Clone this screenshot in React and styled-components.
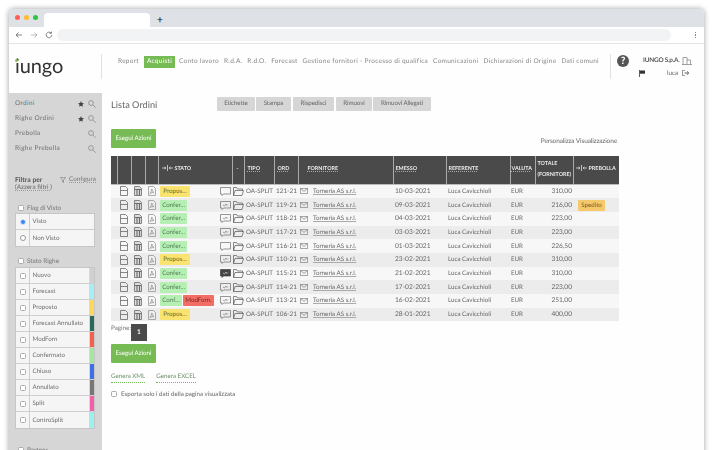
import React from "react";
import styled, { createGlobalStyle } from "styled-components";

const Global = createGlobalStyle`
  html, body { margin: 0; padding: 0; background: #fff; }
  body { width: 714px; height: 450px; overflow: hidden; font-family: "Lato", "Liberation Sans", sans-serif; color: #666; text-rendering: geometricPrecision; }
  * { box-sizing: border-box; }
`;

const Stage = styled.div`
  width: 714px; height: 450px; overflow: hidden; padding: 9px 10px 0 9px; filter: blur(0.4px);
`;
const Win = styled.div`
  width: 695px; height: 460px; background: #fefefe; border-radius: 5px 5px 0 0;
  box-shadow: 0 0 5px 1px rgba(0,0,0,.28); overflow: hidden; display: flex; flex-direction: column;
`;
const TabStrip = styled.div`
  height: 18px; background: #dee1e6; display: flex; align-items: flex-end; padding-left: 6px; flex: none;
`;
const Lights = styled.div`
  display: flex; gap: 4px; align-self: center; margin-right: 6px; margin-top: -2px;
`;
const Light = styled.span`
  width: 5px; height: 5px; border-radius: 50%; background: ${p => p.$c};
`;
const Tab = styled.div`
  width: 106px; height: 14px; background: #fff; border-radius: 4px 4px 0 0;
`;
const Plus = styled.span`
  font-size: 10px; font-weight: 700; color: #444; margin: 0 0 0 7px; line-height: 14px;
`;
const AddressBar = styled.div`
  height: 17px; background: #fff; border-bottom: 1px solid #e4e4e4; display: flex; align-items: center; padding: 0 8px 0 6px; flex: none;
`;
const NavGlyphs = styled.div`
  display: flex; gap: 7px; width: 42px; flex: none; color: #666;
`;
const Url = styled.div`
  width: 614px; height: 12px; border-radius: 6px; background: #f1f3f4; flex: none;
`;
const Dots = styled.div`
  margin-left: auto; display: flex; flex-direction: column; gap: 1px;
  span { width: 1.5px; height: 1.5px; background: #888; display: block; }
`;

const Header = styled.header`
  height: 49px; display: flex; align-items: flex-start; flex: none; padding-top: 10px;
`;
const LogoBox = styled.div`
  width: 93px; height: 25px; border-right: 1px solid #e2e2e2; padding-left: 6px; position: relative; flex: none;
`;
const Logo = styled.span`
  font-size: 20px; line-height: 25px; color: #333; letter-spacing: -.1px; font-weight: 400; display: block;
`;
const LogoDot = styled.i`
  position: absolute; left: 6px; top: 5px; width: 3px; height: 3px; border-radius: 50%; background: #8fc04f;
`;
const Nav = styled.nav`
  width: 508px; height: 25px; display: flex; align-items: flex-start; padding: 2px 0 0 16px; flex: none;
`;
const NavItem = styled.a`
  font-size: 6.5px; line-height: 12px; letter-spacing: .27px; color: ${p => p.$on ? "#fff" : "#888"}; white-space: nowrap;
  background: ${p => p.$on ? "#77bb55" : "transparent"};
  padding: ${p => p.$on ? "0 3px" : "0"}; margin-right: ${p => p.$gap}px;
`;
const UserBox = styled.div`
  width: 94px; height: 25px; border-left: 1px solid #e2e2e2; display: flex; padding-left: 6px; flex: none;
`;
const Help = styled.div`
  width: 12px; height: 12px; border-radius: 50%; background: #555; color: #fff; font-size: 10px; font-weight: 900;
  display: flex; align-items: center; justify-content: center; margin-top: 1px; flex: none;
`;
const UserCol = styled.div`
  display: flex; flex-direction: column; margin-left: 10px; width: 60px;
`;
const Company = styled.div`
  font-size: 6.4px; font-weight: 700; color: #555; display: flex; align-items: center; gap: 2px; height: 14px; padding-left: 4px; letter-spacing: -.2px; white-space: nowrap;
`;
const UserLine = styled.div`
  font-size: 6.3px; color: #666; display: flex; align-items: center; height: 12px;
  span { margin-left: 22px; margin-right: 4px; }
`;

const Body = styled.div`
  flex: 1; display: flex; min-height: 0;
`;
const Side = styled.aside`
  width: 93px; background: #d6d6d6; padding: 3px 6px 0 6px; flex: none; font-size: 6.5px; color: #666;
`;
const MenuRow = styled.div`
  height: 15px; display: flex; align-items: center; letter-spacing: .3px; color: #707070; font-size: 6.5px;
  span { flex: 1; }
  svg { margin-left: 4px; }
`;
const Filter = styled.div`
  margin-top: 20px; display: flex; justify-content: space-between; align-items: flex-start; line-height: 8px; height: 20px; font-size: 6.4px;
  b { color: #555; font-weight: 700; display: block; font-size: 6.8px; }
  u { text-decoration: underline dotted #999; }
`;
const Conf = styled.div`
  display: flex; gap: 3px; align-items: center; color: #777; font-size: 6.3px;
`;
const CheckTitle = styled.div`
  display: flex; align-items: center; gap: 3px; height: 10px; margin: ${p => p.$mt}px 0 ${p => p.$mb}px 3px; color: #777; font-size: 6.4px;
`;
const Box = styled.span`
  width: 6px; height: 6px; background: #fff; border: 1px solid #aaa; border-radius: 1.5px; display: block; flex: none;
`;
const Group = styled.div`
  border: 1px solid #c6c6c6; background: #f5f5f5; margin-right: 1px; width: 80px;
`;
const GroupRow = styled.div`
  height: ${p => p.$h}px; display: flex; align-items: stretch; border-bottom: 1px solid #cfcfcf; font-size: 6.2px; color: #6d6d6d;
  &:last-child { border-bottom: none; }
`;
const Ctl = styled.div`
  width: 14px; border-right: 1px solid #cfcfcf; display: flex; align-items: center; justify-content: center; flex: none;
`;
const Label = styled.div`
  flex: 1; padding-left: 2.5px; display: flex; align-items: center; white-space: nowrap;
`;
const Strip = styled.div`
  width: 5px; flex: none; background: ${p => p.$c}; border-left: 1px solid #d8d8d8;
`;
const Radio = styled.span`
  width: 6px; height: 6px; border-radius: 50%; display: block;
  background: ${p => p.$on ? "#3b82f6" : "#fff"}; border: 1px solid ${p => p.$on ? "#cfe0fb" : "#999"};
`;

const Main = styled.main`
  flex: 1; padding: 3px 0 0 9px; font-size: 6.5px; min-width: 0;
`;
const TitleRow = styled.div`
  display: flex; height: 15px; align-items: center; width: 320px;
`;
const Title = styled.h1`
  font-size: 9.2px; font-weight: 400; color: #666; margin: 0; width: 106px; flex: none; position: relative; top: 1px;
`;
const ToolBtn = styled.button`
  width: ${p => p.$w}px; height: 14px; margin-right: ${p => p.$m}px; background: #d6d6d6; border: 0; padding: 0; flex: none;
  font: 400 6.2px "Lato", sans-serif; color: #666; letter-spacing: -.1px; border-radius: 1px; text-rendering: geometricPrecision;
`;
const ActionRow = styled.div`
  display: flex; justify-content: space-between; align-items: flex-end; width: 506px; margin-top: 18px;
`;
const GreenBtn = styled.button`
  width: 45px; height: 19px; border: 0; background: #77bb55; color: #fff; font: 400 6.2px "Lato", sans-serif; border-radius: 1px; padding: 0; flex: none; text-rendering: geometricPrecision;
`;
const Personal = styled.a`
  font-size: 6.5px; color: #666; letter-spacing: -.12px; margin-bottom: 3px;
`;
const Table = styled.table`
  table-layout: fixed; border-collapse: collapse; width: 508px; margin-top: 8px;
`;
const Th = styled.th`
  background: #4a4a4a; color: #ececec; height: 28px; font-size: 5.4px; font-weight: 700; text-align: left; padding: 0 0 0 ${p => p.$pl || 2}px;
  border-left: 1px solid #aaa; border-bottom: 1px solid #bbb; white-space: nowrap; line-height: 11px; letter-spacing: 0;
  &:first-child { border-left: 0; }
  u { text-decoration: underline dotted #aaa; }
`;
const Tr = styled.tr`
  background: ${p => p.$alt ? "#ececec" : "#f7f7f7"}; height: 13.7px;
`;
const Td = styled.td`
  padding: 0 ${p => p.$pr || 0}px 0 ${p => p.$pl || 0}px; font-size: ${p => p.$fs || 6.2}px; color: #666; white-space: nowrap;
  text-align: ${p => p.$right ? "right" : "left"}; height: 13.7px; line-height: 11px;
  svg { display: block; }
  u { text-decoration: underline solid #aaa; text-underline-offset: 1px; }
`;
const IconCell = styled.div`
  display: flex; justify-content: center; align-items: center;
`;
const StatusCell = styled.div`
  display: flex; align-items: center; padding-left: 2px; gap: 1px; height: 13.7px;
`;
const SupplierCell = styled.div`
  display: flex; align-items: center; gap: 5px; height: 13.7px;
`;
const Pill = styled.span`
  display: inline-flex; align-items: center; justify-content: center; height: 11px; width: ${p => p.$w}px; font-size: 6.2px; border-radius: 1px;
  background: ${p => p.$bg}; color: ${p => p.$fg}; flex: none;
`;
const Comment = styled.span`
  margin-left: auto; margin-right: 1px; display: block; flex: none;
`;
const Pager = styled.div`
  display: flex; align-items: flex-start; height: 17px; margin-top: 3px; font-size: 6.3px; color: #777;
  span { margin-top: 1px; width: 20px; }
`;
const PageNo = styled.div`
  width: 16px; height: 17px; background: #4a4a4a; color: #fff; font-size: 6.5px; font-weight: 700; display: flex; align-items: center; justify-content: center;
`;
const Bottom = styled.div`
  margin-top: 3px;
`;
const Links = styled.div`
  display: flex; gap: 11px; margin-top: 10px; font-size: 6.2px; color: #6f8f6a; line-height: 8px;
  a { border-bottom: 1px dotted #77bb55; padding-bottom: 1px; }
`;
const ExportRow = styled.div`
  display: flex; align-items: center; gap: 4px; margin-top: 7px; font-size: 6.2px; color: #666; height: 8px;
`;

const S = "#6a6a6a";
const Doc = () => <svg width="8" height="10" viewBox="0 0 8 10" fill="none" stroke={S} strokeWidth=".8"><path d="M.5.5h5l2 2v7h-7zM.5 4.5h7"/></svg>;
const Sheet = () => <svg width="8" height="10" viewBox="0 0 8 10" fill="none" stroke={S} strokeWidth=".8"><path d="M.5.5h5l2 2v7h-7z" fill="#ddd"/><path d="M1 3.500h6M3 3.500v6M5.500 3.500v6" strokeWidth="1.100"/></svg>;
const Pdf = () => <svg width="8" height="10" viewBox="0 0 8 10" fill="none" stroke="#8a8a8a" strokeWidth=".7"><path d="M.5.5h5l2 2v7h-7z"/><path d="M3.800 3c-.3 2-1 3.500-2 4.500 1.500-.8 3-1 4.200-.8-1-.7-1.800-2-2.200-3.700z"/></svg>;
const Bubble = ({ mode }) => (
  <svg width="11" height="9" viewBox="0 0 11 9" fill={mode === "dark" ? "#444" : "none"} stroke={mode === "dark" ? "#444" : S} strokeWidth=".7">
    <path d="M.5.5h10v6.500h-7l-1.500 1.500v-1.500h-1.500z"/>
    {mode !== "empty" && <path d="M3 4l1.500 1 1.500-2 1 1.500 1-1" stroke={mode === "dark" ? "#eee" : S} strokeWidth=".6"/>}
  </svg>
);
const Folder = () => <svg width="11" height="9" viewBox="0 0 11 9" fill="none" stroke="#555" strokeWidth=".7"><path d="M.5 8.500v-8h3l1 1.500h5v1.500M.5 8.500h8.500l1.500-5h-8.500z"/></svg>;
const Mail = () => <svg width="8" height="6" viewBox="0 0 8 6" fill="none" stroke="#777" strokeWidth=".7"><path d="M.4.4h7.200v5.200h-7.200zM.4.4l3.600 3 3.600-3"/></svg>;
const Star = () => <svg width="6" height="6" viewBox="0 0 10 10" fill="#444"><path d="M5 0l1.500 3.300 3.500.4-2.600 2.400.7 3.600L5 7.900 1.900 9.700l.7-3.600L0 3.700l3.500-.4z"/></svg>;
const Search = () => <svg width="8" height="8" viewBox="0 0 8 8" fill="none" stroke="#8a8a8a" strokeWidth=".8"><circle cx="3" cy="3" r="2.400"/><path d="M5 5l2.700 2.700"/></svg>;
const Funnel = () => <svg width="6" height="6" viewBox="0 0 6 6" fill="none" stroke="#777" strokeWidth=".6"><path d="M.3.4h5.400l-2.200 2.600v2.500l-1-.6v-1.900z"/></svg>;
const Splitter = () => <svg width="11" height="6" viewBox="0 0 11 6" fill="none" stroke="#ddd" strokeWidth=".8" style={{ marginRight: 2, verticalAlign: -1 }}><path d="M5.500 0v6M7 3h4M0 3h4M2.500 1.800L4 3 2.500 4.200M8.500 1.800L7 3l1.500 1.200"/></svg>;
const Building = () => <svg width="10" height="8" viewBox="0 0 10 8" fill="none" stroke="#666" strokeWidth=".6"><path d="M1 7.500v-7h4v7M5 3h3.500v4.500M0 7.500h10"/></svg>;
const Logout = () => <svg width="7" height="6" viewBox="0 0 7 6" fill="none" stroke="#666" strokeWidth=".7"><path d="M3 .4H.5v5.200H3"/><path d="M2.500 3h4M5 1.400L6.800 3 5 4.600" strokeWidth="1"/></svg>;
const Flag = () => <svg width="6" height="7" viewBox="0 0 6 7"><path d="M.5 0v7" stroke="#333" strokeWidth=".8"/><path d="M1 .5h5v3.200H1z" fill="#333"/></svg>;

const NAV = [["Report",5],["Acquisti",4,true],["Conto lavoro",5],["R.d.A.",5],["R.d.O.",5],["Forecast",5],["Gestione fornitori - Processo di qualifica",5],["Comunicazioni",5],["Dichiarazioni di Origine",5],["Dati comuni",0]];
const STATES = [["Nuovo","#d0d0d0"],["Forecast","#a8eef5"],["Proposto","#f9d85d"],["Forecast Annullato","#27695b"],["ModForn","#f4604e"],["Confermato","#a4e5a0"],["Chiuso","#3f6fe8"],["Annullato","#777"],["Split","#f25fa8"],["ControSplit","#9cf0ee"]];
const ROWS = [
  ["p","empty","121-21","10-03-2021","310,00"],
  ["c","line","119-21","09-03-2021","216,00","Spedito"],
  ["c","line","118-21","04-03-2021","223,00"],
  ["c","line","117-21","03-03-2021","223,00"],
  ["c","empty","116-21","01-03-2021","226,50"],
  ["p","line","110-21","23-02-2021","310,00"],
  ["c","dark","115-21","21-02-2021","310,00"],
  ["c","line","114-21","17-02-2021","223,00"],
  ["m","line","113-21","16-02-2021","251,00"],
  ["p","line","106-21","28-01-2021","400,00"],
];
const COLS = [6,14,14,13,74,12,30,24,95,53,64,25,38,46];

const Status = ({ k }) => {
  if (k === "p") return <Pill $w={30} $bg="#fbe36f" $fg="#6b6320">Propos...</Pill>;
  if (k === "c") return <Pill $w={27} $bg="#b6efb4" $fg="#4f7a52">Confer...</Pill>;
  return <><Pill $w={22} $bg="#b6efb4" $fg="#4f7a52">Conf...</Pill><Pill $w={31} $bg="#f26d66" $fg="#7a2420">ModForn.</Pill></>;
};

export default function App() {
  return (
    <Stage>
      <Global />
      <Win>
        <TabStrip>
          <Lights><Light $c="#ff5f57" /><Light $c="#febc2e" /><Light $c="#28c840" /></Lights>
          <Tab />
          <Plus>+</Plus>
        </TabStrip>
        <AddressBar>
          <NavGlyphs>
            <svg width="8" height="8" viewBox="0 0 8 8" fill="none" stroke="#666" strokeWidth=".8"><path d="M7 4H1M3.500 1.500L1 4l2.500 2.500"/></svg>
            <svg width="8" height="8" viewBox="0 0 8 8" fill="none" stroke="#aaa" strokeWidth=".8"><path d="M1 4h6M4.500 1.500L7 4 4.500 6.500"/></svg>
            <svg width="8" height="8" viewBox="0 0 8 8" fill="none" stroke="#666" strokeWidth=".8"><path d="M6.800 4A2.800 2.800 0 1 1 6 2M6.500.5V2.300H4.700"/></svg>
          </NavGlyphs>
          <Url />
          <Dots><span /><span /><span /></Dots>
        </AddressBar>
        <Header>
          <LogoBox><Logo>iungo</Logo><LogoDot /></LogoBox>
          <Nav>
            {NAV.map(([t, g, on]) => <NavItem key={t} $gap={g} $on={on}>{t}</NavItem>)}
          </Nav>
          <UserBox>
            <Help>?</Help>
            <UserCol>
              <Company>IUNGO S.p.A. <Building /></Company>
              <UserLine><Flag /><span>luca</span><Logout /></UserLine>
            </UserCol>
          </UserBox>
        </Header>
        <Body>
          <Side>
            <MenuRow><span>Ordini</span><Star /><Search /></MenuRow>
            <MenuRow><span>Righe Ordini</span><Star /><Search /></MenuRow>
            <MenuRow><span>Prebolla</span><Search /></MenuRow>
            <MenuRow><span>Righe Prebolla</span><Search /></MenuRow>
            <Filter>
              <div><b>Filtra per</b><u>(Azzera filtri )</u></div>
              <Conf><Funnel /><u>Configura</u></Conf>
            </Filter>
            <CheckTitle $mt={7} $mb={0}><Box />Flag di Visto</CheckTitle>
            <Group>
              <GroupRow $h={16}><Ctl><Radio $on /></Ctl><Label>Visto</Label></GroupRow>
              <GroupRow $h={16}><Ctl><Radio /></Ctl><Label>Non Visto</Label></GroupRow>
            </Group>
            <CheckTitle $mt={9} $mb={1}><Box />Stato Righe</CheckTitle>
            <Group>
              {STATES.map(([t, c]) => (
                <GroupRow key={t} $h={16}><Ctl><Box /></Ctl><Label>{t}</Label><Strip $c={c} /></GroupRow>
              ))}
            </Group>
            <CheckTitle $mt={16} $mb={0}><Box />Partner</CheckTitle>
          </Side>
          <Main>
            <TitleRow>
              <Title>Lista Ordini</Title>
              <ToolBtn $w={38} $m={1}>Etichette</ToolBtn>
              <ToolBtn $w={35} $m={2}>Stampa</ToolBtn>
              <ToolBtn $w={41} $m={2}>Rispedisci</ToolBtn>
              <ToolBtn $w={36} $m={1}>Rimuovi</ToolBtn>
              <ToolBtn $w={58} $m={0}>Rimuovi Allegati</ToolBtn>
            </TitleRow>
            <ActionRow>
              <GreenBtn>Esegui Azioni</GreenBtn>
              <Personal>Personalizza Visualizzazione</Personal>
            </ActionRow>
            <Table>
              <colgroup>{COLS.map((w, i) => <col key={i} style={{ width: w }} />)}</colgroup>
              <thead>
                <tr>
                  <Th /><Th /><Th /><Th />
                  <Th $pl={3}><Splitter />STATO</Th>
                  <Th $pl={4}>-</Th>
                  <Th $pl={3}><u>TIPO</u></Th>
                  <Th $pl={3}><u>ORD</u></Th>
                  <Th $pl={9}><u>FORNITORE</u></Th>
                  <Th><u>EMESSO</u></Th>
                  <Th><u>REFERENTE</u></Th>
                  <Th $pl={1}><u>VALUTA</u></Th>
                  <Th $pl={2}>TOTALE<br />(FORNITORE)</Th>
                  <Th $pl={2}><Splitter />PREBOLLA</Th>
                </tr>
              </thead>
              <tbody>
                {ROWS.map(([st, c, ord, date, tot, pre], i) => (
                  <Tr key={ord} $alt={i % 2 === 1}>
                    <Td />
                    <Td><IconCell><Doc /></IconCell></Td>
                    <Td><IconCell><Sheet /></IconCell></Td>
                    <Td><IconCell><Pdf /></IconCell></Td>
                    <Td><StatusCell><Status k={st} /><Comment><Bubble mode={c} /></Comment></StatusCell></Td>
                    <Td><IconCell><Folder /></IconCell></Td>
                    <Td $pl={2}>OA-SPLIT</Td>
                    <Td $pl={2} $fs={6.4}>{ord}</Td>
                    <Td $pl={2}><SupplierCell><Mail /><u>Tornerìa AS s.r.l.</u></SupplierCell></Td>
                    <Td $pl={2} $fs={6.6}>{date}</Td>
                    <Td $pl={2}>{`Luca Cavicchioli`}</Td>
                    <Td $pl={1}>EUR</Td>
                    <Td $right $pr={1} $fs={6.6}>{tot}</Td>
                    <Td $pl={5}>{pre && <Pill $w={27} $bg="#f5c96b" $fg="#7a5a1c">{pre}</Pill>}</Td>
                  </Tr>
                ))}
              </tbody>
            </Table>
            <Pager><span>Pagine:</span><PageNo>1</PageNo></Pager>
            <Bottom><GreenBtn>Esegui Azioni</GreenBtn></Bottom>
            <Links><a>Genera XML</a><a>Genera EXCEL</a></Links>
            <ExportRow><Box />Esporta solo i dati della pagina visualizzata</ExportRow>
          </Main>
        </Body>
      </Win>
    </Stage>
  );
}
